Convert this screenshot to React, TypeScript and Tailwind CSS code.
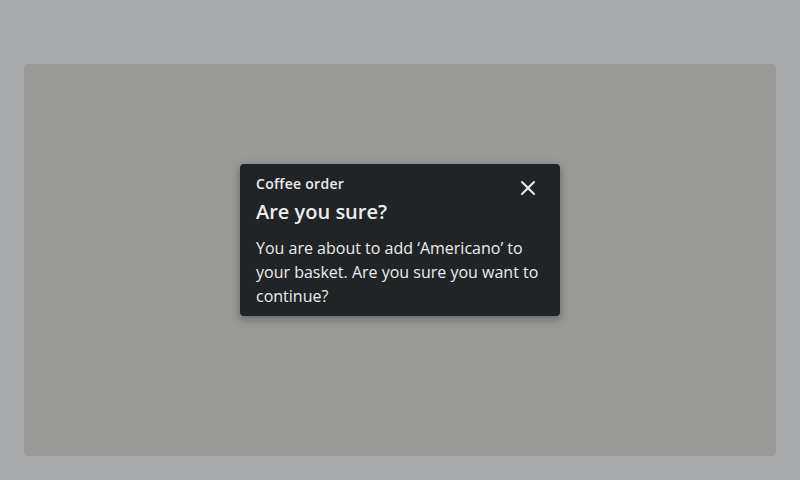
import { X } from "lucide-react";

export default function App() {
  return (
    <div
      className="w-[800px] h-[480px] bg-[#a9aaab] pl-6 pr-6 pt-16 pb-6 flex"
      style={{ fontFamily: '"Open Sans", "Noto Sans", sans-serif' }}
    >
      <div className="flex-1 rounded bg-[#9a9b98] pb-10 flex items-center justify-center">
        <div className="w-[320px] rounded-sm bg-[#212427] text-[#ececec] pl-4 pr-4 pt-[10px] pb-2 shadow-[0_3px_10px_rgba(0,0,0,0.35)]">
          <div className="flex items-start justify-between">
            <div>
              <div className="text-sm font-semibold leading-5 tracking-[0.02em]">Coffee order</div>
              <div className="mt-1 text-xl font-semibold leading-7">Are you sure?</div>
            </div>
            <button className="mt-0.5 mr-1 text-[#ececec]">
              <X size={24} strokeWidth={2} />
            </button>
          </div>
          <p className="mt-2.5 text-base leading-6">
            You are about to add ‘Americano’ to your basket. Are you sure you want to continue?
          </p>
        </div>
      </div>
    </div>
  );
}
